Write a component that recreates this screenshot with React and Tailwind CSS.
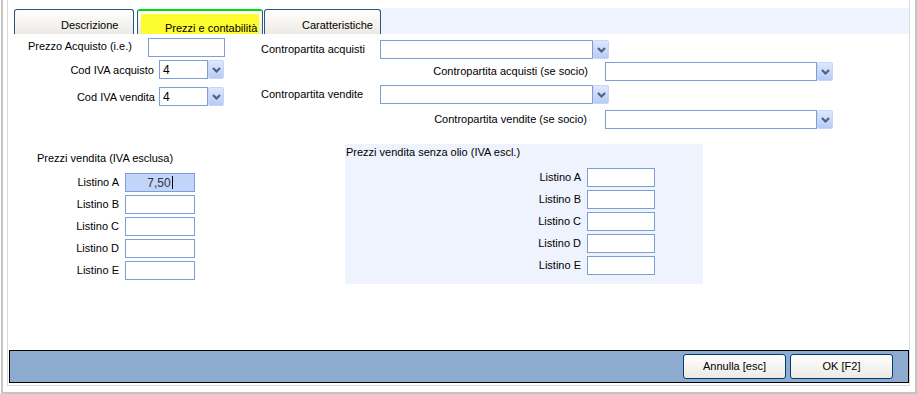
import React from "react";

const font = { fontFamily: '"Liberation Sans", Arial, sans-serif' };

const Chevron = () => (
  <svg width="9" height="6" viewBox="0 0 9 6">
    <path d="M1 1 L4.5 4.5 L8 1" fill="none" stroke="#4d6185" strokeWidth="2.2" />
  </svg>
);

const TextBox = ({ w, children, className = "" }) => (
  <div
    className={`h-[19px] border border-[#7e9ed6] bg-white shrink-0 ${className}`}
    style={{ width: w }}
  >
    {children}
  </div>
);

const Combo = ({ w, value }) => (
  <div className="flex h-[19px] shrink-0">
    <div
      className="h-[19px] border border-[#7e9ed6] bg-white flex items-center pl-[3px] text-[12px] text-black"
      style={{ width: w }}
    >
      {value}
    </div>
    <div className="w-[16px] h-[19px] border border-[#c6d6f8] rounded-[2px] bg-gradient-to-b from-[#dfe8fd] to-[#b7cbf5] flex items-center justify-center">
      <Chevron />
    </div>
  </div>
);

const Tab = ({ w, pl, children, selected }) => (
  <div
    className={`h-[25px] mt-px shrink-0 rounded-t-[3px] border border-b-0 border-[#2a5680] bg-gradient-to-b from-white to-[#eceae3] relative ${
      selected ? "border-t-2 border-t-[#00e000]" : ""
    }`}
    style={{ width: w }}
  >
    {selected && (
      <div className="absolute left-[3px] right-[3px] top-[3px] bottom-0 bg-[#fcfc2e] rounded-[2px]" />
    )}
    <div
      className={`relative text-[11px] text-black whitespace-nowrap ${selected ? "pt-[9px]" : "pt-[7px]"}`}
      style={{ paddingLeft: pl }}
    >
      {children}
    </div>
  </div>
);

const ListinoRow = ({ labelW, inputW, label, children, highlight }) => (
  <div className="flex h-[19px] items-center">
    <div className="text-right pr-[6px] text-[11px] shrink-0" style={{ width: labelW }}>
      {label}
    </div>
    <TextBox
      w={inputW}
      className={highlight ? "!bg-[#c3d4fa] flex items-center justify-center" : ""}
    >
      {children}
    </TextBox>
  </div>
);

export default function App() {
  const letters = ["A", "B", "C", "D", "E"];
  return (
    <div className="w-[917px] h-[394px] bg-white pl-px overflow-hidden text-black" style={font}>
      <div className="w-[916px] h-[394px] border-l-2 border-r-2 border-b-2 border-[#c4c4c4] pl-[4px] pr-[5px] pb-[6px]">
        <div className="h-[386px] border-l border-r border-b border-[#dadada] pt-[8px] flex flex-col">
          {/* tabs */}
          <div className="h-[26px] flex pl-[6px]">
            <Tab w={120} pl={46}>Descrizione</Tab>
            <div className="w-[3px]" />
            <Tab w={126} pl={27} selected>Prezzi e contabilità</Tab>
            <div className="w-[1px]" />
            <Tab w={117} pl={37}>Caratteristiche</Tab>
            <div className="flex-1 bg-[#eef3fd]" />
          </div>

          {/* form */}
          <div className="h-[316px] text-[11px]">
            <div className="flex items-start">
              {/* left column */}
              <div className="w-[232px] flex flex-col">
                <div className="mt-[4px] flex h-[19px] items-center">
                  <div className="w-[140px] pl-[20px] pb-[3px]">Prezzo Acquisto (i.e.)</div>
                  <TextBox w={77} />
                </div>
                <div className="mt-[3px] flex h-[19px] items-center">
                  <div className="w-[151px] text-right pr-[5px] pt-[2px]">Cod IVA acquisto</div>
                  <Combo w={49} value="4" />
                </div>
                <div className="mt-[8px] flex h-[19px] items-center">
                  <div className="w-[151px] text-right pr-[4px] pt-[2px]">Cod IVA vendita</div>
                  <Combo w={49} value="4" />
                </div>
              </div>
              {/* right column */}
              <div className="flex flex-col">
                <div className="mt-[6px] flex h-[19px] items-center">
                  <div className="w-[140px] pl-[21px]">Contropartita acquisti</div>
                  <Combo w={213} />
                </div>
                <div className="mt-[3px] flex h-[19px] items-center">
                  <div className="w-[365px] text-right pr-[17px]">Contropartita acquisti (se socio)</div>
                  <Combo w={212} />
                </div>
                <div className="mt-[4px] flex h-[19px] items-center">
                  <div className="w-[140px] pl-[21px]">Contropartita vendite</div>
                  <Combo w={213} />
                </div>
                <div className="mt-[6px] flex h-[19px] items-center">
                  <div className="w-[365px] text-right pr-[18px]">Contropartita vendite (se socio)</div>
                  <Combo w={212} />
                </div>
              </div>
            </div>

            <div className="mt-[15px] flex items-start">
              {/* Prezzi vendita */}
              <div className="w-[337px] flex flex-col">
                <div className="mt-[8px] h-[13px] leading-[13px] pl-[29px]">Prezzi vendita (IVA esclusa)</div>
                <div className="mt-[8px] flex flex-col gap-[3px]">
                  {letters.map((l) => (
                    <ListinoRow key={l} labelW={117} inputW={70} label={`Listino ${l}`} highlight={l === "A"}>
                      {l === "A" && (
                        <span className="flex items-center text-[12px] text-[#333]">
                          7,50<span className="inline-block w-px h-[13px] bg-black ml-px" />
                        </span>
                      )}
                    </ListinoRow>
                  ))}
                </div>
              </div>
              {/* senza olio panel */}
              <div className="w-[358px] h-[140px] bg-[#eef3fd] flex flex-col">
                <div className="mt-[2px] h-[13px] leading-[13px] pl-px">Prezzi vendita senza olio (IVA escl.)</div>
                <div className="mt-[9px] flex flex-col gap-[3px]">
                  {letters.map((l) => (
                    <ListinoRow key={l} labelW={242} inputW={68} label={`Listino ${l}`} />
                  ))}
                </div>
              </div>
            </div>
          </div>

          {/* bottom bar */}
          <div className="ml-px h-[33px] border border-black bg-[#8eabd0] flex items-center justify-end pr-[15px] gap-[4px]">
            <button className="w-[103px] h-[25px] rounded-[3px] border border-[#003c74] bg-gradient-to-b from-white to-[#eceae2] text-[11px] text-black">
              Annulla [esc]
            </button>
            <button className="w-[103px] h-[25px] rounded-[3px] border border-[#003c74] bg-gradient-to-b from-white to-[#eceae2] text-[11px] text-black">
              OK [F2]
            </button>
          </div>
        </div>
      </div>
    </div>
  );
}
